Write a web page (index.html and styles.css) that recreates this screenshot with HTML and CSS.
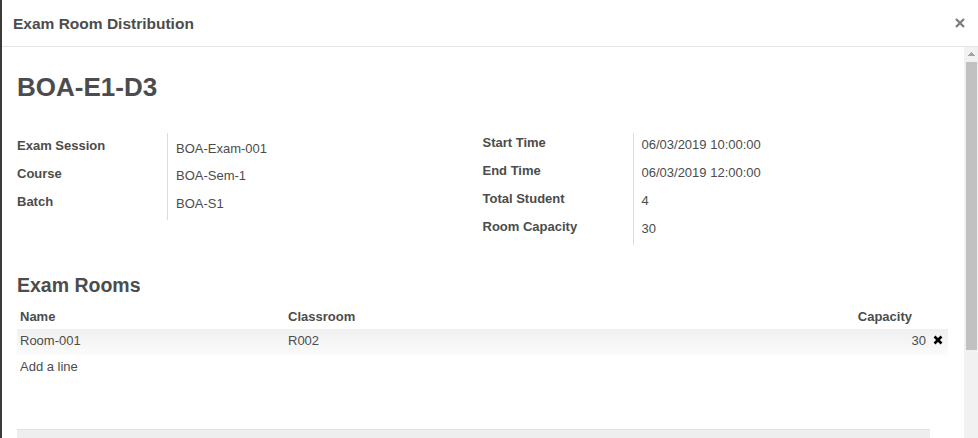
FILE: index.html
```html
<!DOCTYPE html>
<html lang="en">
<head>
    <meta charset="UTF-8">
    <title>Exam Room Distribution</title>
    <link rel="stylesheet" href="styles.css">
</head>
<body>
    <div class="modal">
        <div class="modal-header">
            <h4 class="modal-title">Exam Room Distribution</h4>
            <button class="close" type="button" aria-label="Close">
                <svg width="10" height="10" viewBox="0 0 10 10"><path d="M1 1 L9 9 M9 1 L1 9" stroke="#7d7d7d" stroke-width="2.3"/></svg>
            </button>
        </div>
        <div class="modal-body">
            <div class="sheet">
                <h1 class="record-title">BOA-E1-D3</h1>

                <div class="groups">
                    <div class="group group-left">
                        <div class="label">Exam Session</div><div class="value">BOA-Exam-001</div>
                        <div class="label">Course</div><div class="value">BOA-Sem-1</div>
                        <div class="label">Batch</div><div class="value">BOA-S1</div>
                    </div>
                    <div class="group">
                        <div class="label">Start Time</div><div class="value">06/03/2019 10:00:00</div>
                        <div class="label">End Time</div><div class="value">06/03/2019 12:00:00</div>
                        <div class="label">Total Student</div><div class="value">4</div>
                        <div class="label">Room Capacity</div><div class="value">30</div>
                    </div>
                </div>

                <h2 class="section-title">Exam Rooms</h2>
                <table class="list">
                    <thead>
                        <tr>
                            <th class="col-name">Name</th>
                            <th>Classroom</th>
                            <th class="num head-num">Capacity</th>
                            <th class="col-del"></th>
                        </tr>
                    </thead>
                    <tbody>
                        <tr class="data-row">
                            <td>Room-001</td>
                            <td>R002</td>
                            <td class="num">30</td>
                            <td class="col-del">
                                <svg width="10" height="10" viewBox="0 0 10 10"><path d="M1.5 1.5 L8.5 8.5 M8.5 1.5 L1.5 8.5" stroke="#000" stroke-width="2.6"/></svg>
                            </td>
                        </tr>
                        <tr>
                            <td colspan="4" class="add-line">Add a line</td>
                        </tr>
                    </tbody>
                </table>

                <div class="list-footer"></div>
            </div>
            <div class="scrollbar">
                <div class="scroll-up"></div>
                <div class="scroll-thumb"></div>
            </div>
        </div>
    </div>
</body>
</html>
```

FILE: styles.css
```css
html, body {
    margin: 0;
    height: 100%;
}
body {
    background-color: #3a3a3a;
    font-family: "Liberation Sans", Arial, sans-serif;
    font-size: 13px;
    color: #4c4c4c;
    overflow: hidden;
}
.modal {
    margin-left: 2px;
    height: 438px;
    background: white;
    display: flex;
    flex-direction: column;
}
.modal-header {
    height: 46px;
    border-bottom: 1px solid #e5e5e5;
    display: flex;
    align-items: center;
    justify-content: space-between;
    padding: 0 13px 0 11px;
    flex-shrink: 0;
}
.modal-title {
    margin: 0;
    font-size: 15.5px;
    font-weight: bold;
    color: #4c4c4c;
    padding-top: 1px;
}
.close {
    border: none;
    background: none;
    padding: 0;
    width: 10px;
    height: 10px;
    margin-top: -4px;
    cursor: pointer;
}
.modal-body {
    flex: 1;
    min-height: 0;
    display: flex;
    overflow: hidden;
}
.sheet {
    flex: 1;
    min-width: 0;
    padding: 0 16px 0 15px;
    overflow: hidden;
}
/* fake scrollbar, the screenshot has one */
.scrollbar {
    width: 14px;
    background: #f1f1f1;
    flex-shrink: 0;
}
.scroll-up {
    height: 15px;
    background: conic-gradient(from 139deg at 50% 0, #a3a3a3 82deg, transparent 82deg) no-repeat;
    background-size: 7px 4px;
    background-position: 4px 5px;
}
.scroll-thumb {
    height: 288px;
    margin: 0 1px 0 2px;
    background: #c1c1c1;
}
.record-title {
    margin: 0;
    padding-top: 25px;
    font-size: 26px;
    line-height: 30px;
    font-weight: bold;
    color: #4c4c4c;
}
.groups {
    display: grid;
    grid-template-columns: 1fr 1fr;
    margin-top: 31px;
}
.group {
    display: grid;
    grid-template-columns: 150px 1fr;
    align-self: start;
}
.group .label,
.group .value {
    height: 28px;
    box-sizing: border-box;
    line-height: 18px;
}
.group .label {
    font-weight: bold;
    padding-top: 1px;
}
.group .value {
    border-left: 1px solid #dcdcdc;
    padding: 3px 0 0 8px;
}
.group-left .label:first-child,
.group-left .value:nth-child(2) {
    height: 31px;
    padding-top: 4px;
}
.group-left .value:nth-child(2) {
    padding-top: 7px;
}
.section-title {
    margin: 28px 0 0;
    font-size: 19.5px;
    line-height: 24px;
    font-weight: bold;
    color: #4c4c4c;
}
.list {
    width: 100%;
    border-collapse: collapse;
    margin-top: 7px;
}
.list th {
    text-align: left;
    font-weight: bold;
    padding: 4px 3px 3px;
    line-height: 18px;
}
.list td {
    padding: 3px 3px 4px;
    line-height: 18px;
}
.list .data-row td {
    padding-bottom: 5px;
}
.col-name {
    width: 262px;
}
.num {
    text-align: right !important;
}
.list th.head-num {
    padding-right: 17px;
}
.list .col-del {
    width: 10px;
    padding: 0 5px 0 4px;
}
.list .col-del svg {
    display: block;
    margin-top: 1px;
}
.data-row {
    background-image: linear-gradient(to bottom, #f0f0f0, #fbfbfb);
}
.list td.add-line {
    padding-top: 3px;
}
.list-footer {
    margin-top: 49px;
    margin-right: 18px;
    height: 8px;
    background: #eeeeee;
    border-top: 1px solid #e2e2e2;
}
```
